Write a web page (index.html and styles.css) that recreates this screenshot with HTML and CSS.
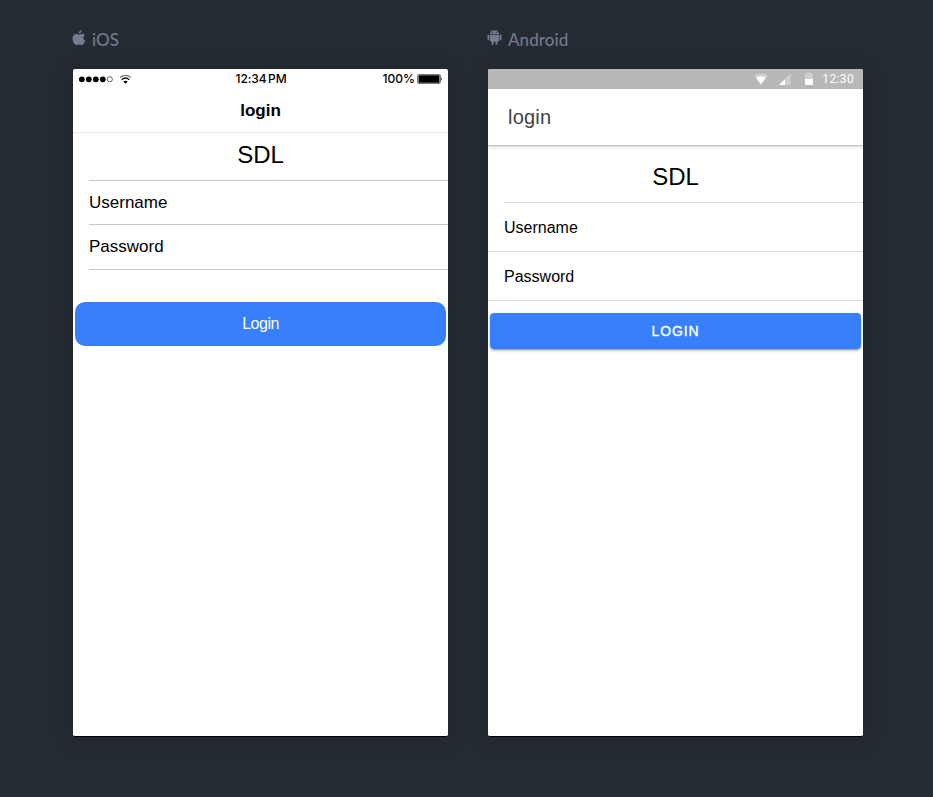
FILE: index.html
```html
<!DOCTYPE html>
<html lang="en">
<head>
<meta charset="utf-8">
<title>Login preview</title>
<link rel="stylesheet" href="styles.css">
</head>
<body>
<main class="previews">
  <section class="preview">
    <h2 class="platform">
      <svg class="platform-icon" width="14" height="17" viewBox="0 0 14 17"><path d="M9.700 .9C9.800 3 8.400 4.300 6.700 4.400C6.600 2.600 8 1.200 9.700 .9ZM12.700 6.300C10.800 7.600 11.100 10.600 13.200 11.500C12.500 13.600 11.300 16 9.900 16C8.900 16 8.500 15.400 7.200 15.400C5.900 15.400 5.400 16 4.500 16C2.600 16 .5 12.400 .5 9.400C.5 6.600 2.300 4.900 4.300 4.900C5.500 4.900 6.300 5.500 7.200 5.500C8 5.500 9 4.700 10.400 4.700C11.400 4.700 12.200 5.300 12.700 6.300Z"/></svg>
      <span>iOS</span>
    </h2>
    <div class="phone ios">
      <div class="statusbar">
        <div class="signal">
          <svg width="54" height="12" viewBox="0 0 54 12"><circle cx="2.800" cy="6.300" r="2.900"/><circle cx="9.800" cy="6.300" r="2.900"/><circle cx="16.800" cy="6.300" r="2.900"/><circle cx="23.800" cy="6.300" r="2.900"/><circle class="ring" cx="30.800" cy="6.300" r="2.600"/><g class="waves"><path class="faint" d="M41 4.500Q46.500 .2 52 4.500"/><path d="M42.800 6.700Q46.500 3.500 50.200 6.700"/></g><path d="M44.300 8.600Q46.500 7 48.700 8.600L46.500 10.800Z"/></svg>
        </div>
        <div class="clock">12:34 PM</div>
        <div class="power"><span>100%</span><svg width="26" height="12" viewBox="0 0 26 12"><rect class="case" x=".5" y="1.500" width="23" height="9" rx="1.500"/><rect x="1.500" y="2.300" width="21" height="7.400" rx=".5"/><path d="M24.300 4.300Q26 6 24.300 7.700Z"/></svg></div>
      </div>
      <header class="title">login</header>
      <div class="content">
        <div class="brand">SDL</div>
        <div class="field">Username</div>
        <div class="field">Password</div>
        <button class="login">Login</button>
      </div>
    </div>
  </section>
  <section class="preview">
    <h2 class="platform">
      <svg class="platform-icon" width="15" height="17" viewBox="0 0 15 17"><path d="M3 5C3.200 2.900 4.600 1.500 7.500 1.500S11.800 2.900 12 5ZM3 5.800H12V12Q12 12.700 11.300 12.700H10.300V14.900Q10.300 15.900 9.400 15.900T8.500 14.900V12.700H6.500V14.900Q6.500 15.900 5.600 15.900T4.700 14.900V12.700H3.700Q3 12.700 3 12Z"/><rect x=".5" y="5.600" width="1.900" height="5.700" rx=".95"/><rect x="12.600" y="5.600" width="1.900" height="5.700" rx=".95"/><path class="antenna" d="M4.200 .8L5.300 2.300M10.800 .8L9.700 2.300"/><circle class="eye" cx="5.600" cy="3.500" r=".5"/><circle class="eye" cx="9.400" cy="3.500" r=".5"/></svg>
      <span>Android</span>
    </h2>
    <div class="phone android">
      <div class="statusbar">
        <svg width="60" height="14" viewBox="0 0 60 14"><path class="dim" d="M0 3.500Q7 -.5 14 3.500L7 12.500Z"/><path d="M2 5.500Q7 3 12 5.500L7 12.500Z"/><path class="dim" d="M36.500 1.500V13H25Z"/><path d="M31 7.200V13H25Z"/><path class="dim" d="M51 1.500H52.500V.5H57V1.500H59V7H51Z"/><rect x="51" y="7" width="8" height="6"/></svg>
        <span class="clock">12:30</span>
      </div>
      <header class="title">login</header>
      <div class="content">
        <div class="brand">SDL</div>
        <div class="field">Username</div>
        <div class="field">Password</div>
        <button class="login">LOGIN</button>
      </div>
    </div>
  </section>
</main>
</body>
</html>
```
FILE: styles.css
```css
* { box-sizing: border-box; }
body {
  margin: 0;
  min-height: 797px;
  background: #252b33;
  font-family: "Liberation Sans", Arial, sans-serif;
}
svg { display: block; }
.previews { display: flex; gap: 40px; padding: 29px 0 0 73px; }
.preview { width: 375px; }
.platform {
  display: flex;
  gap: 6px;
  height: 20px;
  margin: 0 0 20px -1px;
  color: #707a8e;
  font: 500 17px/21px Lato, sans-serif;
  letter-spacing: .05px;
}
.platform-icon { fill: #737d91; }
.antenna { stroke: #737d91; stroke-width: .6; }
.eye { fill: #252b33; }
.phone {
  height: 668px;
  overflow: hidden;
  border-bottom: 1px solid #000;
  border-radius: 2px;
  background: #fff;
  box-shadow: 0 2px 20px rgba(0, 0, 0, .15);
}
.brand { display: flex; justify-content: center; font-size: 24px; color: #000; }
.login { display: block; width: 371px; margin: 0 2px; padding: 0; border: 0; background: #387ffe; color: #fff; font-family: inherit; }

.ios .statusbar {
  display: grid;
  grid-template-columns: 1fr auto 1fr;
  align-items: center;
  height: 20px;
  padding: 0 5px 0 6px;
  font: 500 12px/20px Inter, sans-serif;
  color: #000;
}
.ios .clock { word-spacing: -1.5px; letter-spacing: -.1px; }
.ring { fill: none; stroke: #000; stroke-width: .6; }
.waves { fill: none; stroke: #000; stroke-width: 1.400; }
.waves .faint { stroke: #777; }
.case { fill: none; stroke: #777; stroke-width: 1; }
.power { display: flex; align-items: center; justify-content: flex-end; gap: 2px; }
.ios .title {
  height: 44px;
  border-bottom: 1px solid #e9e9ea;
  text-align: center;
  font-size: 17px;
  font-weight: 600;
  line-height: 43px;
}
.ios .brand { height: 48px; margin-left: 16px; padding: 8px 16px 0 0; border-bottom: 1px solid #c8c7cc; line-height: 28px; }
.ios .field { height: 44px; margin-left: 16px; border-bottom: 1px solid #c8c7cc; font-size: 17px; line-height: 43px; }
.ios .field + .field { height: 45px; }
.ios .login { height: 44px; margin-top: 32px; border-radius: 10px; font-size: 16px; letter-spacing: -.03em; }

.android .statusbar {
  display: flex;
  align-items: center;
  justify-content: flex-end;
  gap: 8px;
  height: 20px;
  padding-right: 9px;
  background: #b8b8b8;
  color: #fff;
  font: 400 12px/21px Roboto, sans-serif;
  letter-spacing: .35px;
}
.android .statusbar svg { fill: #fff; }
.android .statusbar .dim { fill: #cfcfcf; }
.android .title {
  height: 56px;
  padding-left: 20px;
  box-shadow: 0 1px 1px rgba(0, 0, 0, .14), 0 2px 4px rgba(0, 0, 0, .14);
  color: #424242;
  font-size: 20px;
  letter-spacing: .2px;
  line-height: 56px;
}
.android .brand { height: 58px; margin-left: 16px; padding: 18px 16px 0 0; border-bottom: 1px solid #dedede; line-height: 28px; }
.android .field { height: 49px; padding-left: 16px; border-bottom: 1px solid #dedede; font-size: 16px; line-height: 49px; }
.android .login {
  height: 36px;
  margin-top: 12px;
  border-radius: 4px;
  box-shadow: 0 3px 1px -2px rgba(0, 0, 0, .2), 0 2px 2px rgba(0, 0, 0, .14), 0 1px 5px rgba(0, 0, 0, .12);
  font-size: 14px;
  font-weight: 500;
  letter-spacing: .06em;
  -webkit-text-stroke: .35px #fff;
}
```
